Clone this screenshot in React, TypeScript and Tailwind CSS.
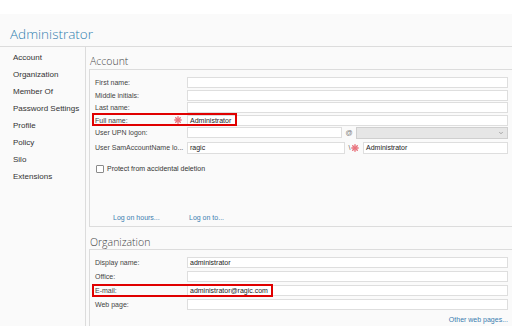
import { ChevronDown } from "lucide-react";

const Star = () => (
  <svg width="8" height="8" viewBox="0 0 8 8" className="shrink-0">
    <g stroke="#e8737d" strokeWidth="1.4" strokeLinecap="round">
      <line x1="4" y1="0.8" x2="4" y2="7.2" />
      <line x1="0.8" y1="4" x2="7.2" y2="4" />
      <line x1="1.7" y1="1.7" x2="6.3" y2="6.3" />
      <line x1="6.3" y1="1.7" x2="1.7" y2="6.3" />
    </g>
  </svg>
);

const Input = ({ value = "", className = "flex-1" }: { value?: string; className?: string }) => (
  <div className={`${className} h-full bg-white border border-[#dedede] pl-[2px] flex items-center text-[7px] text-[#222] leading-none`}>
    {value}
  </div>
);

const Row = ({ label, value, star }: { label: string; value?: string; star?: boolean }) => (
  <div className="flex h-[11px] items-center">
    <div className="w-[92px] flex items-center justify-between pr-[5px] text-[7px] text-[#444] leading-none">
      <span>{label}</span>
      {star && <Star />}
    </div>
    <Input value={value} />
  </div>
);

const sideItems = ["Account", "Organization", "Member Of", "Password Settings", "Profile", "Policy", "Silo", "Extensions"];

export default function App() {
  return (
    <div className="relative w-[512px] h-[326px] overflow-hidden bg-[#fafafa] font-['Liberation_Sans',Arial,sans-serif]">
      <div className="h-[14px] bg-white" />
      <div className="h-[33px] border-b border-[#dcdcdc] pl-[10px] pb-[5px] flex items-end">
        <span className="font-['Open_Sans',sans-serif] font-light text-[13.5px] leading-[14px] text-[#2f7fb0]">Administrator</span>
      </div>
      <div className="flex h-[279px]">
        <div className="w-[86px] border-r border-[#dcdcdc] pl-[13px] pt-[1.5px]">
          {sideItems.map((s) => (
            <div key={s} className="text-[8px] leading-[17.1px] text-[#333]">
              {s}
            </div>
          ))}
        </div>
        <div className="flex-1 pl-[3px] pr-[4px]">
          <div className="h-[23px] border-b border-[#dcdcdc] flex items-end pb-[2px] pl-[1px] -mr-[4px]">
            <span className="font-['Open_Sans',sans-serif] font-light text-[10.5px] leading-[11px] text-[#444]">Account</span>
          </div>
          <div className="h-[157px] border-l border-b border-[#dcdcdc] -mr-[4px] pr-[4px] pl-[5px] pt-[7px] flex flex-col">
            <div className="flex flex-col gap-[1.5px]">
              <Row label="First name:" />
              <Row label="Middle initials:" />
              <Row label="Last name:" />
              <Row label="Full name:" value="Administrator" star />
              <div className="flex h-[11px] items-center">
                <div className="w-[92px] text-[7px] text-[#444] leading-none">User UPN logon:</div>
                <Input className="w-[155px]" />
                <div className="w-[14px] text-center text-[7px] text-[#777] leading-none">@</div>
                <div className="flex-1 h-[12px] bg-[#e6e6e6] border border-[#cfcfcf] flex items-center justify-end pr-[3px]">
                  <ChevronDown size={6} color="#666" strokeWidth={2} />
                </div>
              </div>
              <div className="flex h-[12px] items-center mt-[2px]">
                <div className="w-[92px] text-[7px] text-[#444] leading-none">User SamAccountName lo...</div>
                <Input value="ragic" className="w-[158px]" />
                <div className="w-[18px] flex items-center justify-center gap-[1px] text-[7px] text-[#666] leading-none">
                  <span>\</span>
                  <Star />
                </div>
                <Input value="Administrator" />
              </div>
            </div>
            <div className="flex items-center mt-[11px] pl-[1px]">
              <div className="w-[8px] h-[8px] bg-white border border-[#8a8a8a] rounded-[1px]" />
              <span className="ml-[3px] text-[7px] text-[#333] leading-none">Protect from accidental deletion</span>
            </div>
            <div className="mt-auto pb-[4px] pl-[18px] flex text-[7px] leading-[9px] text-[#3b7db0]">
              <span className="w-[76px]">Log on hours...</span>
              <span>Log on to...</span>
            </div>
          </div>
          <div className="h-[23px] border-b border-[#dcdcdc] flex items-end pb-[1px] pl-[1px] -mr-[4px]">
            <span className="font-['Open_Sans',sans-serif] font-light text-[10.5px] leading-[11px] text-[#444]">Organization</span>
          </div>
          <div className="h-[80px] border-l border-[#dcdcdc] pl-[5px] pt-[7px] flex flex-col">
            <div className="flex flex-col gap-[3px]">
              <Row label="Display name:" value="administrator" />
              <Row label="Office:" />
              <Row label="E-mail:" value="administrator@ragic.com" />
              <Row label="Web page:" />
            </div>
            <div className="mt-[5px] text-right text-[7px] leading-[9px] text-[#3b7db0]">Other web pages...</div>
          </div>
        </div>
      </div>
      <div className="absolute left-[92px] top-[113px] w-[145px] h-[13px] border-2 border-[#e00000]" />
      <div className="absolute left-[92px] top-[284px] w-[181px] h-[13px] border-2 border-[#e00000]" />
    </div>
  );
}
